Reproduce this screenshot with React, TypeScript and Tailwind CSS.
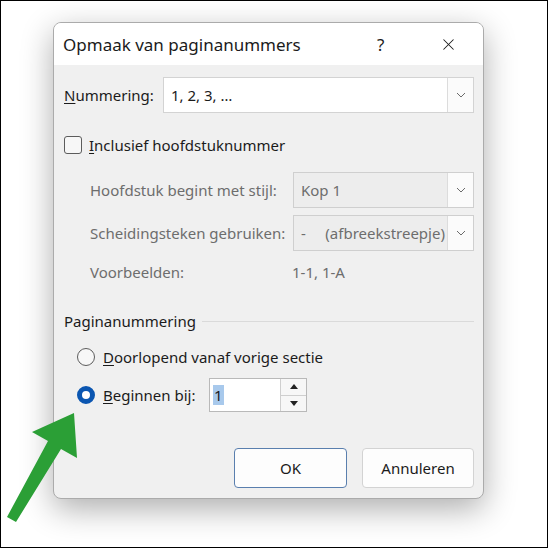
import { X } from "lucide-react";

const font = { fontFamily: '"Noto Sans", "Open Sans", sans-serif' };

function Chevron() {
  return (
    <svg width="10" height="6" viewBox="0 0 10 6" className="text-[#6b6b6b]">
      <path d="M1 1l4 4 4-4" fill="none" stroke="currentColor" strokeWidth="1" />
    </svg>
  );
}

function Select({ value, width, disabled }: { value: React.ReactNode; width: string; disabled?: boolean }) {
  return (
    <div
      className={`${width} h-[36px] flex border ${
        disabled ? "border-[#cfcfcf] bg-[#ededed] text-[#6d6d6d]" : "border-[#d3d3d3] bg-white text-[#1b1b1b]"
      }`}
    >
      <div className="flex-1 flex items-center pl-[7px] whitespace-pre">{value}</div>
      <div className="w-[26px] flex items-center justify-center border-l border-[#dcdcdc] bg-[#fbfbfb]">
        <Chevron />
      </div>
    </div>
  );
}

export default function App() {
  return (
    <div className="relative w-[548px] h-[548px] border border-black bg-white overflow-hidden" style={font}>
      {/* Dialog */}
      <div className="ml-[52px] mt-[21px] w-[431px] h-[477px] rounded-[8px] border border-[#ababab] bg-[#f0f0f0] shadow-[0_10px_32px_rgba(0,0,0,0.32)] overflow-hidden flex flex-col text-[15px] text-[#1b1b1b]">
        {/* Title bar */}
        <div className="h-[42px] shrink-0 bg-white flex items-center pl-[9px]">
          <span className="text-[17px] flex-1 pt-[2px]">Opmaak van paginanummers</span>
          <span className="text-[17px] w-[10px] mr-[52px] pt-[2px]">?</span>
          <X className="w-[19px] h-[19px] mr-[25px] text-[#1b1b1b]" strokeWidth={1.3} />
        </div>

        {/* Body */}
        <div className="flex-1 flex flex-col pl-[10px] pr-[9px]">
          <div className="mt-[12px] flex items-center h-[36px]">
            <span className="w-[99px]">
              <span className="underline underline-offset-2">N</span>ummering:
            </span>
            <Select value="1, 2, 3, …" width="w-[311px]" />
          </div>

          <div className="mt-[22px] flex items-center h-[20px]">
            <div className="w-[18px] h-[18px] rounded-[3px] border border-[#5c5c5c] bg-[#f7f7f7]" />
            <span className="ml-[7px]">
              <span className="underline underline-offset-2">I</span>nclusief hoofdstuknummer
            </span>
          </div>

          <div className="mt-[17px] flex items-center h-[36px] text-[#6d6d6d]">
            <span className="w-[229px] pl-[26px]">Hoofdstuk begint met stijl:</span>
            <Select value="Kop 1" width="w-[181px]" disabled />
          </div>

          <div className="mt-[7px] flex items-center h-[36px] text-[#6d6d6d]">
            <span className="w-[229px] pl-[26px]">Scheidingsteken gebruiken:</span>
            <Select value={"-     (afbreekstreepje)"} width="w-[181px]" disabled />
          </div>

          <div className="mt-[11px] flex items-center h-[20px] text-[#6d6d6d]">
            <span className="w-[228px] pl-[26px]">Voorbeelden:</span>
            <span>1-1, 1-A</span>
          </div>

          <div className="mt-[29px] flex items-center h-[20px]">
            <span>Paginanummering</span>
            <div className="flex-1 h-px bg-[#dadada] ml-[6px] mt-[1px]" />
          </div>

          <div className="mt-[16px] flex items-center h-[20px] pl-[13px]">
            <div className="w-[18px] h-[18px] rounded-full border border-[#5c5c5c] bg-[#f7f7f7]" />
            <span className="ml-[8px]">
              <span className="underline underline-offset-2">D</span>oorlopend vanaf vorige sectie
            </span>
          </div>

          <div className="mt-[11px] flex items-center h-[34px] pl-[13px]">
            <div className="w-[18px] h-[18px] rounded-full border-[5px] border-[#0b56b1] bg-white" />
            <span className="ml-[8px] w-[106px]">
              <span className="underline underline-offset-2">B</span>eginnen bij:
            </span>
            <div className="w-[98px] h-[34px] flex border border-[#b9b9b9] bg-white">
              <div className="flex-1 flex items-center pl-[3px]">
                <span className="bg-[#a8c9ec] px-[1px] leading-[20px]">1</span>
              </div>
              <div className="w-[26px] flex flex-col border-l border-[#cfcfcf]">
                <div className="flex-1 flex items-center justify-center border-b border-[#cfcfcf] bg-[#f7f7f7]">
                  <svg width="8" height="5" viewBox="0 0 8 5"><path d="M0 5L4 0l4 5z" fill="#222" /></svg>
                </div>
                <div className="flex-1 flex items-center justify-center bg-[#f7f7f7]">
                  <svg width="8" height="5" viewBox="0 0 8 5"><path d="M0 0h8L4 5z" fill="#222" /></svg>
                </div>
              </div>
            </div>
          </div>

          <div className="mt-[36px] flex justify-end gap-[15px]">
            <button className="w-[113px] h-[40px] rounded-[4px] border border-[#5a7fae] bg-[#fdfdfd]">OK</button>
            <button className="w-[112px] h-[40px] rounded-[4px] border border-[#d3d3d3] bg-[#fdfdfd]">Annuleren</button>
          </div>
        </div>
      </div>

      {/* Green arrow */}
      <svg className="absolute left-0 top-0" width="546" height="546" viewBox="0 0 546 546">
        <polygon
          points="73,412 31,431 47,440 6,516 15,521 60,448 76,457"
          fill="#2b9f36"
        />
      </svg>
    </div>
  );
}
